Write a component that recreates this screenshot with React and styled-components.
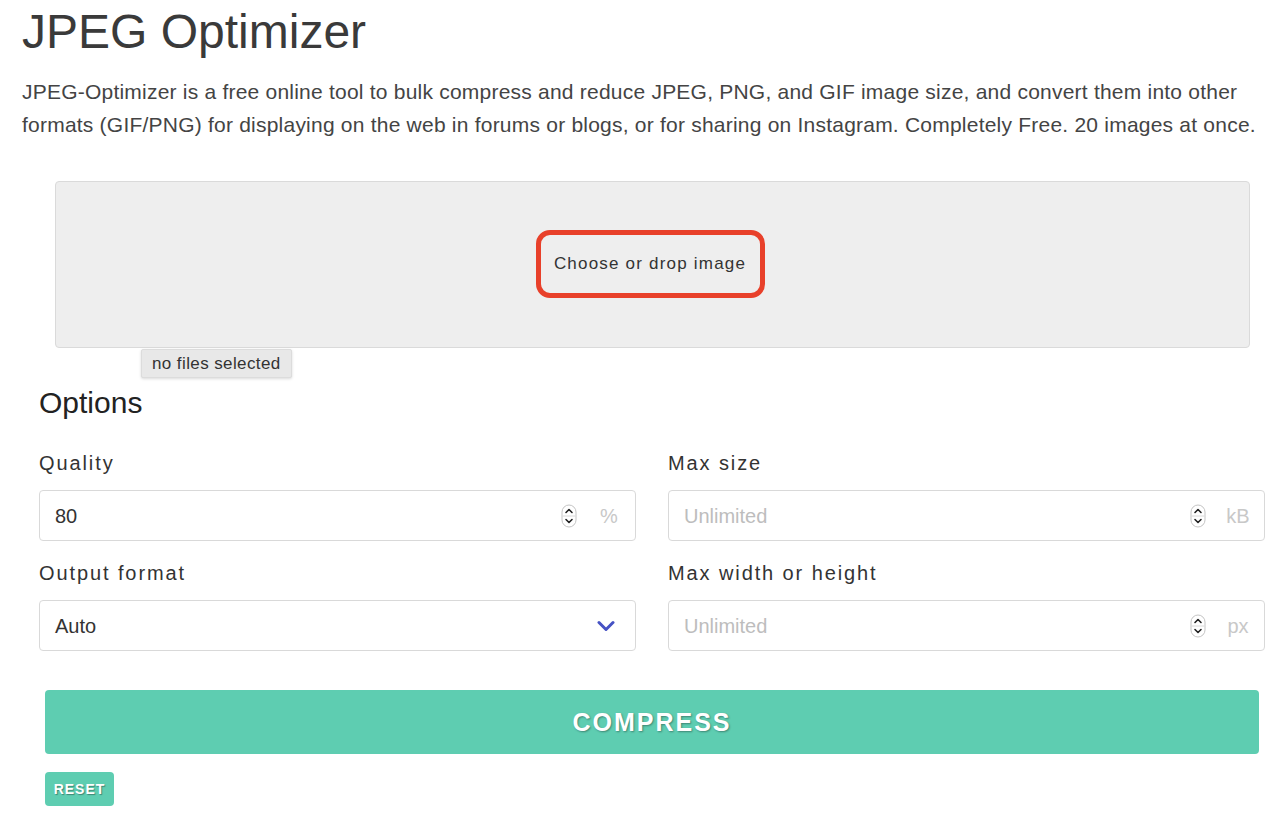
import React from "react";
import styled, { createGlobalStyle } from "styled-components";

const GlobalStyle = createGlobalStyle`
  html, body {
    margin: 0;
    padding: 0;
    background: #ffffff;
    font-family: "Liberation Sans", Arial, Helvetica, sans-serif;
    color: #333;
  }
`;

const Page = styled.div`
  width: 1280px;
  padding-bottom: 7px;
`;

const Header = styled.header`
  padding: 6px 8px 0 22px;

  h1 {
    margin: 0;
    font-size: 48px;
    line-height: 52px;
    font-weight: 400;
    color: #3a3a3a;
  }

  p {
    margin: 17px 0 0 0;
    font-size: 21px;
    line-height: 33px;
    letter-spacing: 0.22px;
    color: #444;
  }
`;

const DropZone = styled.div`
  position: relative;
  margin: 40px 30px 0 55px;
  height: 165px;
  background: #eeeeee;
  border: 1px solid #dadada;
  border-radius: 4px;
  display: flex;
  align-items: center;
  justify-content: center;
`;

const ChooseButton = styled.button`
  box-sizing: border-box;
  width: 229px;
  height: 68px;
  margin: -2px 5px 0 0;
  background: #eeeeee;
  border: 5px solid #e8402a;
  border-radius: 14px;
  font-family: inherit;
  font-size: 17px;
  letter-spacing: 1.2px;
  color: #333;
  cursor: pointer;
`;

const FileStatus = styled.span`
  position: absolute;
  left: 85px;
  top: calc(100% + 2px);
  box-sizing: border-box;
  height: 29px;
  padding: 0 10px;
  display: flex;
  align-items: center;
  background: #e8e8e8;
  border: 1px solid #dcdcdc;
  border-radius: 2px;
  box-shadow: 0 1px 3px rgba(0, 0, 0, 0.15);
  font-size: 17px;
  letter-spacing: 0.4px;
  color: #333;
`;

const Options = styled.section`
  padding: 0 15px 0 39px;

  h2 {
    margin: 37px 0 0 0;
    font-size: 30px;
    line-height: 36px;
    font-weight: 400;
    color: #222;
  }
`;

const Grid = styled.div`
  margin-top: 30px;
  display: grid;
  grid-template-columns: 1fr 1fr;
  column-gap: 32px;
  row-gap: 20px;
`;

const Field = styled.div`
  display: flex;
  flex-direction: column;
  gap: 15px;
`;

const Label = styled.label`
  font-size: 20px;
  line-height: 24px;
  letter-spacing: 1.9px;
  color: #333;
`;

const InputBox = styled.div`
  box-sizing: border-box;
  height: 51px;
  border: 1px solid #d9d9d9;
  border-radius: 4px;
  display: flex;
  align-items: center;
  padding: 0 6px 0 15px;
  background: #fff;
`;

const Value = styled.span`
  flex: 1;
  font-size: 20px;
  padding-top: 2px;
  color: ${(p) => (p.$placeholder ? "#bdbdbd" : "#333")};
`;

const Unit = styled.span`
  width: 40px;
  text-align: center;
  font-size: 20px;
  padding-top: 2px;
  color: #c8c8c8;
  margin-left: 12px;
`;

const Chevron = styled.span`
  display: flex;
  margin-right: 14px;
`;

const CompressButton = styled.button`
  display: block;
  box-sizing: border-box;
  width: calc(100% - 66px);
  margin: 39px 21px 0 45px;
  height: 64px;
  border: none;
  border-radius: 4px;
  background: #5ecdb1;
  color: #fff;
  font-family: inherit;
  font-size: 25px;
  font-weight: 700;
  letter-spacing: 2px;
  text-shadow: 1px 1px 2px rgba(0, 0, 0, 0.35);
  cursor: pointer;
`;

const ResetButton = styled.button`
  display: block;
  margin: 18px 0 0 45px;
  width: 69px;
  height: 34px;
  border: none;
  border-radius: 4px;
  background: #5ecdb1;
  color: #fff;
  font-family: inherit;
  font-size: 14px;
  font-weight: 700;
  letter-spacing: 1px;
  text-shadow: 1px 1px 1px rgba(0, 0, 0, 0.35);
  cursor: pointer;
`;

function Spinner() {
  return (
    <svg width="16" height="24" viewBox="0 0 16 24">
      <rect x="1" y="1" width="14" height="22" rx="7" fill="#fff" stroke="#c4c4c4" />
      <line x1="1.5" y1="12" x2="14.5" y2="12" stroke="#d8d8d8" />
      <path d="M5 8.5 L8 5.5 L11 8.5" fill="none" stroke="#222" strokeWidth="1.6" strokeLinecap="round" strokeLinejoin="round" />
      <path d="M5 15.5 L8 18.5 L11 15.5" fill="none" stroke="#222" strokeWidth="1.6" strokeLinecap="round" strokeLinejoin="round" />
    </svg>
  );
}

function NumberField({ label, value, placeholder, unit }) {
  return (
    <Field>
      <Label>{label}</Label>
      <InputBox>
        <Value $placeholder={!value}>{value || placeholder}</Value>
        <Spinner />
        <Unit>{unit}</Unit>
      </InputBox>
    </Field>
  );
}

export default function App() {
  return (
    <Page>
      <GlobalStyle />
      <Header>
        <h1>JPEG Optimizer</h1>
        <p>
          JPEG-Optimizer is a free online tool to bulk compress and reduce JPEG, PNG, and GIF image size, and convert them into other
          formats (GIF/PNG) for displaying on the web in forums or blogs, or for sharing on Instagram. Completely Free. 20 images at once.
        </p>
      </Header>

      <DropZone>
        <ChooseButton>Choose or drop image</ChooseButton>
        <FileStatus>no files selected</FileStatus>
      </DropZone>

      <Options>
        <h2>Options</h2>
        <Grid>
          <NumberField label="Quality" value="80" unit="%" />
          <NumberField label="Max size" placeholder="Unlimited" unit="kB" />
          <Field>
            <Label>Output format</Label>
            <InputBox>
              <Value>Auto</Value>
              <Chevron>
                <svg width="18" height="12" viewBox="0 0 18 12">
                  <path d="M2 2.5 L9 9.5 L16 2.5" fill="none" stroke="#4652c4" strokeWidth="3" strokeLinecap="round" strokeLinejoin="round" />
                </svg>
              </Chevron>
            </InputBox>
          </Field>
          <NumberField label="Max width or height" placeholder="Unlimited" unit="px" />
        </Grid>
      </Options>

      <CompressButton>COMPRESS</CompressButton>
      <ResetButton>RESET</ResetButton>
    </Page>
  );
}
